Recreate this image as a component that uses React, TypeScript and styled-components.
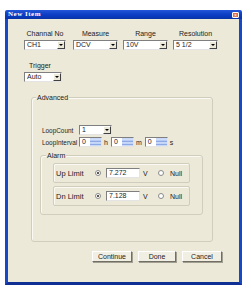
import React from 'react';
import styled, { createGlobalStyle } from 'styled-components';

const GlobalStyle = createGlobalStyle`
  * { box-sizing: border-box; }
  body {
    margin: 0;
    background: #ffffff;
    font-family: 'Liberation Sans', Arial, sans-serif;
    font-size: 7px;
    color: #222;
  }
`;

const Window = styled.div`
  width: 237px;
  height: 275px;
  margin: 10px 0 0 5px;
  display: flex;
  flex-direction: column;
`;

const TitleBar = styled.div`
  height: 9px;
  display: flex;
  align-items: center;
  justify-content: space-between;
  padding: 0 3px 0 3px;
  background: linear-gradient(180deg, #2456d8 0%, #0a3cc4 55%, #0833a8 100%);
  border-radius: 2px 2px 0 0;
`;

const TitleText = styled.span`
  color: #fff;
  font-family: 'Liberation Serif', 'Times New Roman', serif;
  font-weight: bold;
  font-size: 7px;
  line-height: 9px;
  letter-spacing: 0.5px;
`;

const CloseButton = styled.span`
  width: 7px;
  height: 6px;
  border-radius: 1px;
  border: 1px solid #fff;
  background: #e06a48;
  color: #fff;
  font-size: 5px;
  line-height: 4px;
  text-align: center;
`;

const Frame = styled.div`
  flex: 1;
  border: 3px solid #1648c8;
  border-top: 0;
  border-bottom-color: #0f2f95;
  background: #ece9d8;
  display: flex;
  flex-direction: column;
  padding: 10px 0 0 16px;
`;

const TopRow = styled.div`
  display: flex;
  gap: 5px;
`;

const Field = styled.div<{ $mr?: number }>`
  display: flex;
  flex-direction: column;
  margin-right: ${(p) => p.$mr ?? 0}px;
`;

const FieldLabel = styled.span<{ $left?: boolean }>`
  height: 9px;
  line-height: 9px;
  margin-bottom: 2px;
  text-align: ${(p) => (p.$left ? 'left' : 'center')};
  padding-left: ${(p) => (p.$left ? 5 : 0)}px;
  white-space: nowrap;
`;

const SelectBox = styled.div<{ $w: number }>`
  width: ${(p) => p.$w}px;
  height: 10px;
  display: flex;
  background: #fff;
  border: 1px solid;
  border-color: #7f7f7f #e4e4e4 #e4e4e4 #7f7f7f;
`;

const SelectText = styled.span`
  flex: 1;
  line-height: 8px;
  padding-left: 2px;
  white-space: nowrap;
  overflow: hidden;
`;

const DropButton = styled.span`
  width: 8px;
  height: 8px;
  display: flex;
  align-items: center;
  justify-content: center;
  background: #ece9d8;
  border: 1px solid;
  border-color: #fff #404040 #404040 #fff;

  &::after {
    content: '';
    border-left: 2px solid transparent;
    border-right: 2px solid transparent;
    border-top: 2px solid #000;
  }
`;

const TriggerField = styled(Field)`
  margin-top: 11px;
`;

const GroupBox = styled.div<{ $w: number; $h: number; $ml: number; $mt: number }>`
  position: relative;
  width: ${(p) => p.$w}px;
  height: ${(p) => p.$h}px;
  margin: ${(p) => p.$mt}px 0 0 ${(p) => p.$ml}px;
  border: 1px solid #d0cdbd;
  border-radius: 3px;
  box-shadow: inset 1px 1px 0 #faf9f4;
`;

const GroupTitle = styled.span<{ $left: number }>`
  position: absolute;
  top: -5px;
  left: ${(p) => p.$left}px;
  padding: 0 1px;
  line-height: 9px;
  background: #ece9d8;
`;

const AdvancedBody = styled.div`
  padding: 27px 0 0 8px;
`;

const FormRow = styled.div<{ $mt?: number }>`
  display: flex;
  align-items: center;
  height: 10px;
  padding-left: 2px;
  margin-top: ${(p) => p.$mt ?? 0}px;
`;

const RowLabel = styled.span`
  width: 37px;
  font-size: 6.4px;
  white-space: nowrap;
`;

const SpinBox = styled.div`
  width: 23px;
  height: 10px;
  display: flex;
  background: #fff;
  border: 1px solid;
  border-color: #7f7f7f #e4e4e4 #e4e4e4 #7f7f7f;
`;

const SpinText = styled.span`
  flex: 1;
  line-height: 8px;
  padding-left: 2px;
`;

const SpinButtons = styled.span`
  width: 11px;
  display: flex;
  flex-direction: column;
  gap: 1px;
  padding: 1px 0;
  background: #c8d8f8;
`;

const SpinHalf = styled.span`
  flex: 1;
  background: linear-gradient(180deg, #dbe6fd 0%, #a9c1f2 100%);
  border-bottom: 1px solid #8fa9e3;
`;

const Unit = styled.span`
  margin: 0 3px 0 2px;
`;

const AlarmBody = styled.div`
  padding: 7px 0 0 12px;
  display: flex;
  flex-direction: column;
  gap: 3px;
`;

const LimitBox = styled.div`
  width: 137px;
  height: 20px;
  display: flex;
  align-items: center;
  padding-left: 2px;
  border: 1px solid #d0cdbd;
  border-radius: 2px;
  box-shadow: inset 1px 1px 0 #faf9f4;
`;

const LimitLabel = styled.span`
  width: 39px;
  font-size: 7.5px;
  white-space: nowrap;
`;

const Radio = styled.span<{ $checked?: boolean }>`
  width: 6px;
  height: 6px;
  border-radius: 50%;
  border: 1px solid #8a8a8a;
  background: #fff;
  display: flex;
  align-items: center;
  justify-content: center;

  &::after {
    content: '';
    width: 2px;
    height: 2px;
    border-radius: 50%;
    background: ${(p) => (p.$checked ? '#222' : 'transparent')};
  }
`;

const TextInput = styled.span`
  width: 34px;
  height: 10px;
  margin-left: 5px;
  line-height: 8px;
  padding-left: 2px;
  background: #fff;
  border: 1px solid;
  border-color: #7f7f7f #e4e4e4 #e4e4e4 #7f7f7f;
`;

const VoltUnit = styled.span`
  margin: 0 10px 0 3px;
  width: 5px;
`;

const NullLabel = styled.span`
  margin-left: 6px;
`;

const ButtonRow = styled.div`
  display: flex;
  justify-content: flex-end;
  gap: 6px;
  margin-top: 9px;
  padding-right: 17px;
`;

const Button = styled.button<{ $w: number }>`
  width: ${(p) => p.$w}px;
  height: 11px;
  padding: 0;
  font-family: 'Liberation Sans', Arial, sans-serif;
  font-size: 7px;
  line-height: 9px;
  color: #222;
  background: #f1efe4;
  border: 1px solid;
  border-color: #fff #716f64 #716f64 #fff;
  box-shadow: 1px 1px 0 #a19f92;
`;

const Select = ({ w, value }: { w: number; value: string }) => (
  <SelectBox $w={w}>
    <SelectText>{value}</SelectText>
    <DropButton />
  </SelectBox>
);

const Spin = ({ value }: { value: string }) => (
  <SpinBox>
    <SpinText>{value}</SpinText>
    <SpinButtons>
      <SpinHalf />
      <SpinHalf />
    </SpinButtons>
  </SpinBox>
);

const LimitRow = ({ label, value }: { label: string; value: string }) => (
  <LimitBox>
    <LimitLabel>{label}</LimitLabel>
    <Radio $checked />
    <TextInput>{value}</TextInput>
    <VoltUnit>V</VoltUnit>
    <Radio />
    <NullLabel>Null</NullLabel>
  </LimitBox>
);

export default function App() {
  return (
    <>
      <GlobalStyle />
      <Window>
        <TitleBar>
          <TitleText>New Item</TitleText>
          <CloseButton>×</CloseButton>
        </TitleBar>
        <Frame>
          <TopRow>
            <Field $mr={2}>
              <FieldLabel>Channal No</FieldLabel>
              <Select w={42} value="CH1" />
            </Field>
            <Field>
              <FieldLabel>Measure</FieldLabel>
              <Select w={45} value="DCV" />
            </Field>
            <Field>
              <FieldLabel>Range</FieldLabel>
              <Select w={45} value="10V" />
            </Field>
            <Field>
              <FieldLabel>Resolution</FieldLabel>
              <Select w={45} value="5 1/2" />
            </Field>
          </TopRow>

          <TriggerField>
            <FieldLabel $left>Trigger</FieldLabel>
            <Select w={38} value="Auto" />
          </TriggerField>

          <GroupBox $w={182} $h={145} $ml={7} $mt={15}>
            <GroupTitle $left={4}>Advanced</GroupTitle>
            <AdvancedBody>
              <FormRow>
                <RowLabel>LoopCount</RowLabel>
                <Select w={33} value="1" />
              </FormRow>
              <FormRow $mt={2}>
                <RowLabel>LoopInterval</RowLabel>
                <Spin value="0" />
                <Unit>h</Unit>
                <Spin value="0" />
                <Unit>m</Unit>
                <Spin value="0" />
                <Unit>s</Unit>
              </FormRow>
              <GroupBox $w={163} $h={60} $ml={0} $mt={8}>
                <GroupTitle $left={5}>Alarm</GroupTitle>
                <AlarmBody>
                  <LimitRow label="Up Limit" value="7.272" />
                  <LimitRow label="Dn Limit" value="7.128" />
                </AlarmBody>
              </GroupBox>
            </AdvancedBody>
          </GroupBox>

          <ButtonRow>
            <Button $w={40}>Continue</Button>
            <Button $w={38}>Done</Button>
            <Button $w={40}>Cancel</Button>
          </ButtonRow>
        </Frame>
      </Window>
    </>
  );
}
